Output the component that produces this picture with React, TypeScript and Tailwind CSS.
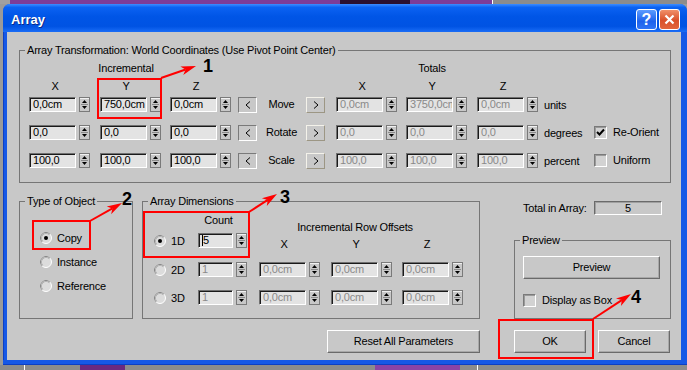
import React from "react";

type Kids = { children?: React.ReactNode };

function Spin() {
  return (
    <svg width="11" height="15" viewBox="0 0 11 15" className="block shrink-0">
      <rect x="0.5" y="0.5" width="10" height="14" fill="#c8c8c8" stroke="#7a7a7a" />
      <line x1="1" y1="1.5" x2="10" y2="1.5" stroke="#f0f0f0" />
      <line x1="2" y1="7.5" x2="9" y2="7.5" stroke="#8a8a8a" />
      <path d="M5.5 3 L8 6 L3 6 Z" fill="#000" />
      <path d="M3 9 L8 9 L5.5 12 Z" fill="#000" />
    </svg>
  );
}

function Field({ v, w = "w-[47px]", dim = false, caret = false }: { v: string; w?: string; dim?: boolean; caret?: boolean }) {
  return (
    <div
      className={`${w} h-[15px] shrink-0 border border-t-[#707070] border-l-[#707070] border-r-white border-b-white bg-[#e3e3e3] shadow-[inset_1px_1px_0_#1a1a1a] flex items-center pl-[3px] overflow-hidden whitespace-nowrap leading-none ${
        dim ? "text-[#8a8a8a]" : "text-black"
      }`}
    >
      {caret && <span className="w-[1px] h-[11px] bg-black mr-[0px]" />}
      {v}
    </div>
  );
}

function Cell({ v, w, dim = false }: { v: string; w: string; dim?: boolean }) {
  return (
    <div className={`flex items-center gap-[3px] shrink-0 ${w}`}>
      <Field v={v} dim={dim} />
      <Spin />
    </div>
  );
}

function Center({ w, children }: { w: string } & Kids) {
  return <div className={`${w} shrink-0 flex justify-center whitespace-nowrap`}>{children}</div>;
}

function Group({ label, className, children }: { label: string; className: string } & Kids) {
  return (
    <div className={`relative shrink-0 border border-[#767676] ${className}`}>
      <span className="absolute left-[5px] top-[-8px] px-[2px] bg-[#c8c8c8] leading-[14px] whitespace-nowrap">{label}</span>
      {children}
    </div>
  );
}

function NudgeBtn({ dir }: { dir: "<" | ">" }) {
  const edge =
    dir === "<"
      ? "border-t-[#7a7a7a] border-l-[#7a7a7a] border-b-white border-r-white"
      : "border-t-[#f4f2ea] border-l-[#f4f2ea] border-b-[#9c9684] border-r-[#9c9684]";
  return (
    <div className={`w-[19px] h-[16px] shrink-0 border ${edge} bg-[#c8c8c8] flex items-center justify-center`}>
      <svg width="6" height="8" viewBox="0 0 6 8">
        {dir === "<" ? (
          <path d="M5 0.5 L1 4 L5 7.5" stroke="#000" fill="none" />
        ) : (
          <path d="M1 0.5 L5 4 L1 7.5" stroke="#000" fill="none" />
        )}
      </svg>
    </div>
  );
}

function Check({ on = false }: { on?: boolean }) {
  return (
    <div className="w-[13px] h-[13px] shrink-0 border border-t-[#7a7a7a] border-l-[#7a7a7a] border-b-white border-r-white bg-[#d2d2d2] shadow-[inset_1px_1px_0_#9a9a9a] flex items-center justify-center">
      {on && (
        <svg width="9" height="9" viewBox="0 0 9 9">
          <path d="M1 4 L3.5 6.5 L8 1.5" stroke="#000" strokeWidth="2" fill="none" />
        </svg>
      )}
    </div>
  );
}

function Radio({ on = false }: { on?: boolean }) {
  return (
    <svg width="12" height="12" viewBox="0 0 12 12" className="block shrink-0">
      <circle cx="6" cy="6" r="5.5" fill="#dcdcdc" stroke="#ffffff" />
      <path d="M2.11 9.89 A5.5 5.5 0 0 1 9.89 2.11" stroke="#808080" fill="none" />
      <path d="M2.82 9.18 A4.5 4.5 0 0 1 9.18 2.82" stroke="#b4b4b4" fill="none" />
      {on && <circle cx="6" cy="6" r="2" fill="#000" />}
    </svg>
  );
}

function Btn({ w, children }: { w: string } & Kids) {
  return (
    <div
      className={`${w} h-[23px] shrink-0 border border-t-white border-l-white border-b-[#6a6a6a] border-r-[#6a6a6a] bg-[#c8c8c8] shadow-[inset_-1px_-1px_0_#a8a8a8] flex items-center justify-center whitespace-nowrap`}
    >
      {children}
    </div>
  );
}

function Arrow({ x1, y1, x2, y2 }: { x1: number; y1: number; x2: number; y2: number }) {
  const dx = x2 - x1;
  const dy = y2 - y1;
  const len = Math.hypot(dx, dy);
  const ux = dx / len;
  const uy = dy / len;
  const hl = 15;
  const hw = 4.5;
  const bx = x2 - ux * hl;
  const by = y2 - uy * hl;
  const pts = `${x2},${y2} ${bx - uy * hw},${by + ux * hw} ${bx + ux * 4},${by + uy * 4} ${bx + uy * hw},${by - ux * hw}`;
  return (
    <g>
      <line x1={x1} y1={y1} x2={bx + ux * 4} y2={by + uy * 4} stroke="#ff0000" strokeWidth="2" />
      <polygon points={pts} fill="#ff0000" />
    </g>
  );
}

function TransformRow({ label, inc, tot, unit, box }: { label: string; inc: string[]; tot: string[]; unit: string; box?: React.ReactNode }) {
  return (
    <div className="flex items-center h-[15px]">
      <Cell w="w-[71px]" v={inc[0]} />
      <Cell w="w-[70px]" v={inc[1]} />
      <Cell w="w-[68px]" v={inc[2]} />
      <NudgeBtn dir="<" />
      <Center w="w-[49px]">{label}</Center>
      <NudgeBtn dir=">" />
      <div className="w-[11px] shrink-0" />
      <Cell w="w-[70px]" v={tot[0]} dim />
      <Cell w="w-[71px]" v={tot[1]} dim />
      <Cell w="w-[67px]" v={tot[2]} dim />
      <div className="w-[50px] shrink-0 leading-[14px]">{unit}</div>
      {box}
    </div>
  );
}

function DimRow({ label, on, count, caret, offsets }: { label: string; on?: boolean; count: string; caret?: boolean; offsets?: boolean }) {
  return (
    <div className="flex items-center h-[15px]">
      <div className="w-[116px] shrink-0 flex items-center">
        <div className="ml-[11px]">
          <Radio on={on} />
        </div>
        <div className="ml-[5px] w-[27px] leading-[14px]">{label}</div>
        <Field v={count} w="w-[35px]" dim={!on} caret={caret} />
        <div className="ml-[3px]">
          <Spin />
        </div>
      </div>
      {offsets && (
        <>
          <Cell w="w-[72px]" v="0,0cm" dim />
          <Cell w="w-[71px]" v="0,0cm" dim />
          <Cell w="w-[62px]" v="0,0cm" dim />
        </>
      )}
    </div>
  );
}

export default function App() {
  return (
    <div className="relative w-[687px] h-[370px] overflow-hidden bg-[#9a9a9a] font-['Liberation_Sans',Arial,sans-serif] text-[11px] tracking-[-0.2px] text-black flex flex-col">
      {/* desktop behind the dialog */}
      <div className="h-[4px] flex shrink-0">
        <div className="w-[10px] bg-[#a0a0a0]" />
        <div className="w-[330px] bg-[#7d3c98]" />
        <div className="w-[70px] bg-[#2a1030]" />
        <div className="w-[82px] bg-[#7d3c98]" />
        <div className="w-[1px] bg-white" />
        <div className="flex-1 bg-[#8c8c8c]" />
      </div>

      {/* window */}
      <div className="ml-[3px] w-[684px] h-[361px] shrink-0 rounded-t-[7px] bg-[#1658e6] flex flex-col overflow-hidden">
        <div className="h-[28px] shrink-0 flex items-start pl-[8px] pr-[7px] bg-[linear-gradient(to_bottom,#3d8dff_0%,#0b62f2_12%,#0055e6_45%,#0053e3_80%,#1a6cf6_100%)]">
          <div className="pt-[8px] text-[13px] font-bold text-white tracking-normal leading-[16px] [text-shadow:1px_1px_0_#0a2a8a]">Array</div>
          <div className="ml-auto mt-[5px] flex gap-[2px]">
            <div className="w-[21px] h-[21px] rounded-[3px] border border-white bg-[linear-gradient(to_bottom,#5c9cff,#1e62ec_60%,#2f74f5)] flex items-center justify-center text-white font-bold text-[16px] leading-none tracking-normal">
              ?
            </div>
            <div className="w-[21px] h-[21px] rounded-[3px] border border-white bg-[linear-gradient(to_bottom,#f0906a,#d9502a_55%,#e2653c)] flex items-center justify-center">
              <svg width="11" height="11" viewBox="0 0 11 11">
                <path d="M1.5 1.5 L9.5 9.5 M9.5 1.5 L1.5 9.5" stroke="#fff" strokeWidth="2.2" />
              </svg>
            </div>
          </div>
        </div>

        <div className="flex flex-1">
          <div className="w-[4px] shrink-0 border-l border-[#0c3fc4]" />
          {/* client area */}
          <div className="w-[674px] h-[328px] shrink-0 bg-[#c8c8c8] pl-[12px] pt-[18px] flex flex-col">
            <Group label="Array Transformation: World Coordinates (Use Pivot Point Center)" className="w-[652px] h-[133px] pt-[10px] pl-[9px]">
              <div className="flex h-[14px] leading-[14px]">
                <div className="w-[71px] shrink-0" />
                <Center w="w-[52px]">Incremental</Center>
                <div className="w-[254px] shrink-0" />
                <Center w="w-[52px]">Totals</Center>
              </div>
              <div className="flex h-[14px] leading-[14px] mt-[4px]">
                <div className="w-[71px] shrink-0"><Center w="w-[52px]">X</Center></div>
                <div className="w-[70px] shrink-0"><Center w="w-[52px]">Y</Center></div>
                <div className="w-[166px] shrink-0"><Center w="w-[52px]">Z</Center></div>
                <div className="w-[70px] shrink-0"><Center w="w-[52px]">X</Center></div>
                <div className="w-[71px] shrink-0"><Center w="w-[52px]">Y</Center></div>
                <div className="w-[67px] shrink-0"><Center w="w-[52px]">Z</Center></div>
              </div>
              <div className="mt-[4px] flex flex-col gap-[13px]">
                <TransformRow label="Move" inc={["0,0cm", "750,0cm", "0,0cm"]} tot={["0,0cm", "3750,0cm", "0,0cm"]} unit="units" />
                <TransformRow
                  label="Rotate"
                  inc={["0,0", "0,0", "0,0"]}
                  tot={["0,0", "0,0", "0,0"]}
                  unit="degrees"
                  box={
                    <div className="flex items-center">
                      <Check on />
                      <span className="ml-[6px] whitespace-nowrap">Re-Orient</span>
                    </div>
                  }
                />
                <TransformRow
                  label="Scale"
                  inc={["100,0", "100,0", "100,0"]}
                  tot={["100,0", "100,0", "100,0"]}
                  unit="percent"
                  box={
                    <div className="flex items-center">
                      <Check />
                      <span className="ml-[6px] whitespace-nowrap">Uniform</span>
                    </div>
                  }
                />
              </div>
            </Group>

            <div className="mt-[18px] flex">
              {/* left column */}
              <div className="w-[461px] shrink-0 flex flex-col">
                <div className="flex h-[118px]">
                  <Group label="Type of Object" className="w-[114px] h-[118px] pt-[29px] pl-[20px]">
                    <div className="flex flex-col gap-[10px]">
                      {[
                        ["Copy", true],
                        ["Instance", false],
                        ["Reference", false],
                      ].map(([t, on]) => (
                        <div key={t as string} className="flex items-center h-[14px]">
                          <Radio on={on as boolean} />
                          <span className="ml-[5px] leading-[14px]">{t as string}</span>
                        </div>
                      ))}
                    </div>
                  </Group>
                  <Group label="Array Dimensions" className="ml-[9px] w-[338px] h-[118px]">
                    <div className="flex h-[60px]">
                      <div className="w-[116px] shrink-0 flex flex-col">
                        <div className="ml-[55px] mt-[11px] h-[14px] leading-[14px] w-[41px] flex justify-center">Count</div>
                        <div className="mt-[6px]">
                          <DimRow label="1D" on count="5" caret />
                        </div>
                      </div>
                      <div className="flex flex-col">
                        <div className="mt-[18px] h-[14px] leading-[14px]">
                          <Center w="w-[192px]">Incremental Row Offsets</Center>
                        </div>
                        <div className="mt-[3px] flex h-[14px] leading-[14px]">
                          <div className="w-[72px] shrink-0"><Center w="w-[50px]">X</Center></div>
                          <div className="w-[71px] shrink-0"><Center w="w-[50px]">Y</Center></div>
                          <div className="w-[62px] shrink-0"><Center w="w-[50px]">Z</Center></div>
                        </div>
                      </div>
                    </div>
                    <DimRow label="2D" count="1" offsets />
                    <div className="mt-[13px]">
                      <DimRow label="3D" count="1" offsets />
                    </div>
                  </Group>
                </div>
                <div className="mt-[11px] flex justify-end">
                  <Btn w="w-[153px]">Reset All Parameters</Btn>
                </div>
              </div>

              {/* right column */}
              <div className="ml-[34px] w-[157px] shrink-0 flex flex-col">
                <div className="h-[14px] flex items-center">
                  <span className="ml-[9px] whitespace-nowrap">Total in Array:</span>
                  <div className="ml-auto mr-[9px] w-[68px] h-[14px] border border-t-[#6a6a6a] border-l-[#6a6a6a] border-b-white border-r-white bg-[#c8c8c8] shadow-[inset_1px_1px_0_#a0a0a0] flex items-center justify-center leading-none">
                    5
                  </div>
                </div>
                <Group label="Preview" className="mt-[25px] w-[157px] h-[79px] pl-[8px] pt-[15px]">
                  <Btn w="w-[137px]">Preview</Btn>
                  <div className="mt-[13px] flex items-center">
                    <Check />
                    <span className="ml-[6px] whitespace-nowrap">Display as Box</span>
                  </div>
                </Group>
                <div className="mt-[11px] flex">
                  <Btn w="w-[72px]">OK</Btn>
                  <div className="ml-[12px]">
                    <Btn w="w-[72px]">Cancel</Btn>
                  </div>
                </div>
              </div>
            </div>
          </div>
          <div className="flex-1" />
        </div>
        <div className="h-[5px] shrink-0 border-b border-[#0c3fc4]" />
      </div>

      {/* desktop below */}
      <div className="flex-1 flex">
        <div className="w-[24px] bg-[#8c8c8c]" />
        <div className="w-[1px] bg-white" />
        <div className="w-[55px] bg-[#8c8c8c]" />
        <div className="w-[45px] bg-[#6a2a80]" />
        <div className="w-[250px] bg-[#8c8c8c]" />
        <div className="w-[85px] bg-[#8a44a6]" />
        <div className="w-[17px] bg-[#8c8c8c]" />
        <div className="w-[1px] bg-white" />
        <div className="flex-1 bg-[#8c8c8c]" />
      </div>

      {/* tutorial annotations */}
      <svg className="absolute inset-0 pointer-events-none" width="687" height="370" viewBox="0 0 687 370">
        <rect x="98" y="79" width="63" height="39" fill="none" stroke="#ff0000" strokeWidth="2" />
        <rect x="33" y="221" width="57" height="28" fill="none" stroke="#ff0000" strokeWidth="2" />
        <rect x="144" y="212" width="105" height="45" fill="none" stroke="#ff0000" strokeWidth="2" />
        <rect x="499" y="320" width="94" height="38" fill="none" stroke="#ff0000" strokeWidth="2" />
        <Arrow x1={161} y1={78} x2={196} y2={66} />
        <Arrow x1={90} y1={221} x2={122} y2={203} />
        <Arrow x1={249} y1={212} x2={277} y2={194} />
        <Arrow x1={593} y1={319} x2={631} y2={294} />
      </svg>
      <span className="absolute left-[203px] top-[57px] text-[18px] font-bold leading-[18px] tracking-normal">1</span>
      <span className="absolute left-[122px] top-[190px] text-[18px] font-bold leading-[18px] tracking-normal">2</span>
      <span className="absolute left-[280px] top-[188px] text-[18px] font-bold leading-[18px] tracking-normal">3</span>
      <span className="absolute left-[631px] top-[288px] text-[18px] font-bold leading-[18px] tracking-normal">4</span>
    </div>
  );
}
